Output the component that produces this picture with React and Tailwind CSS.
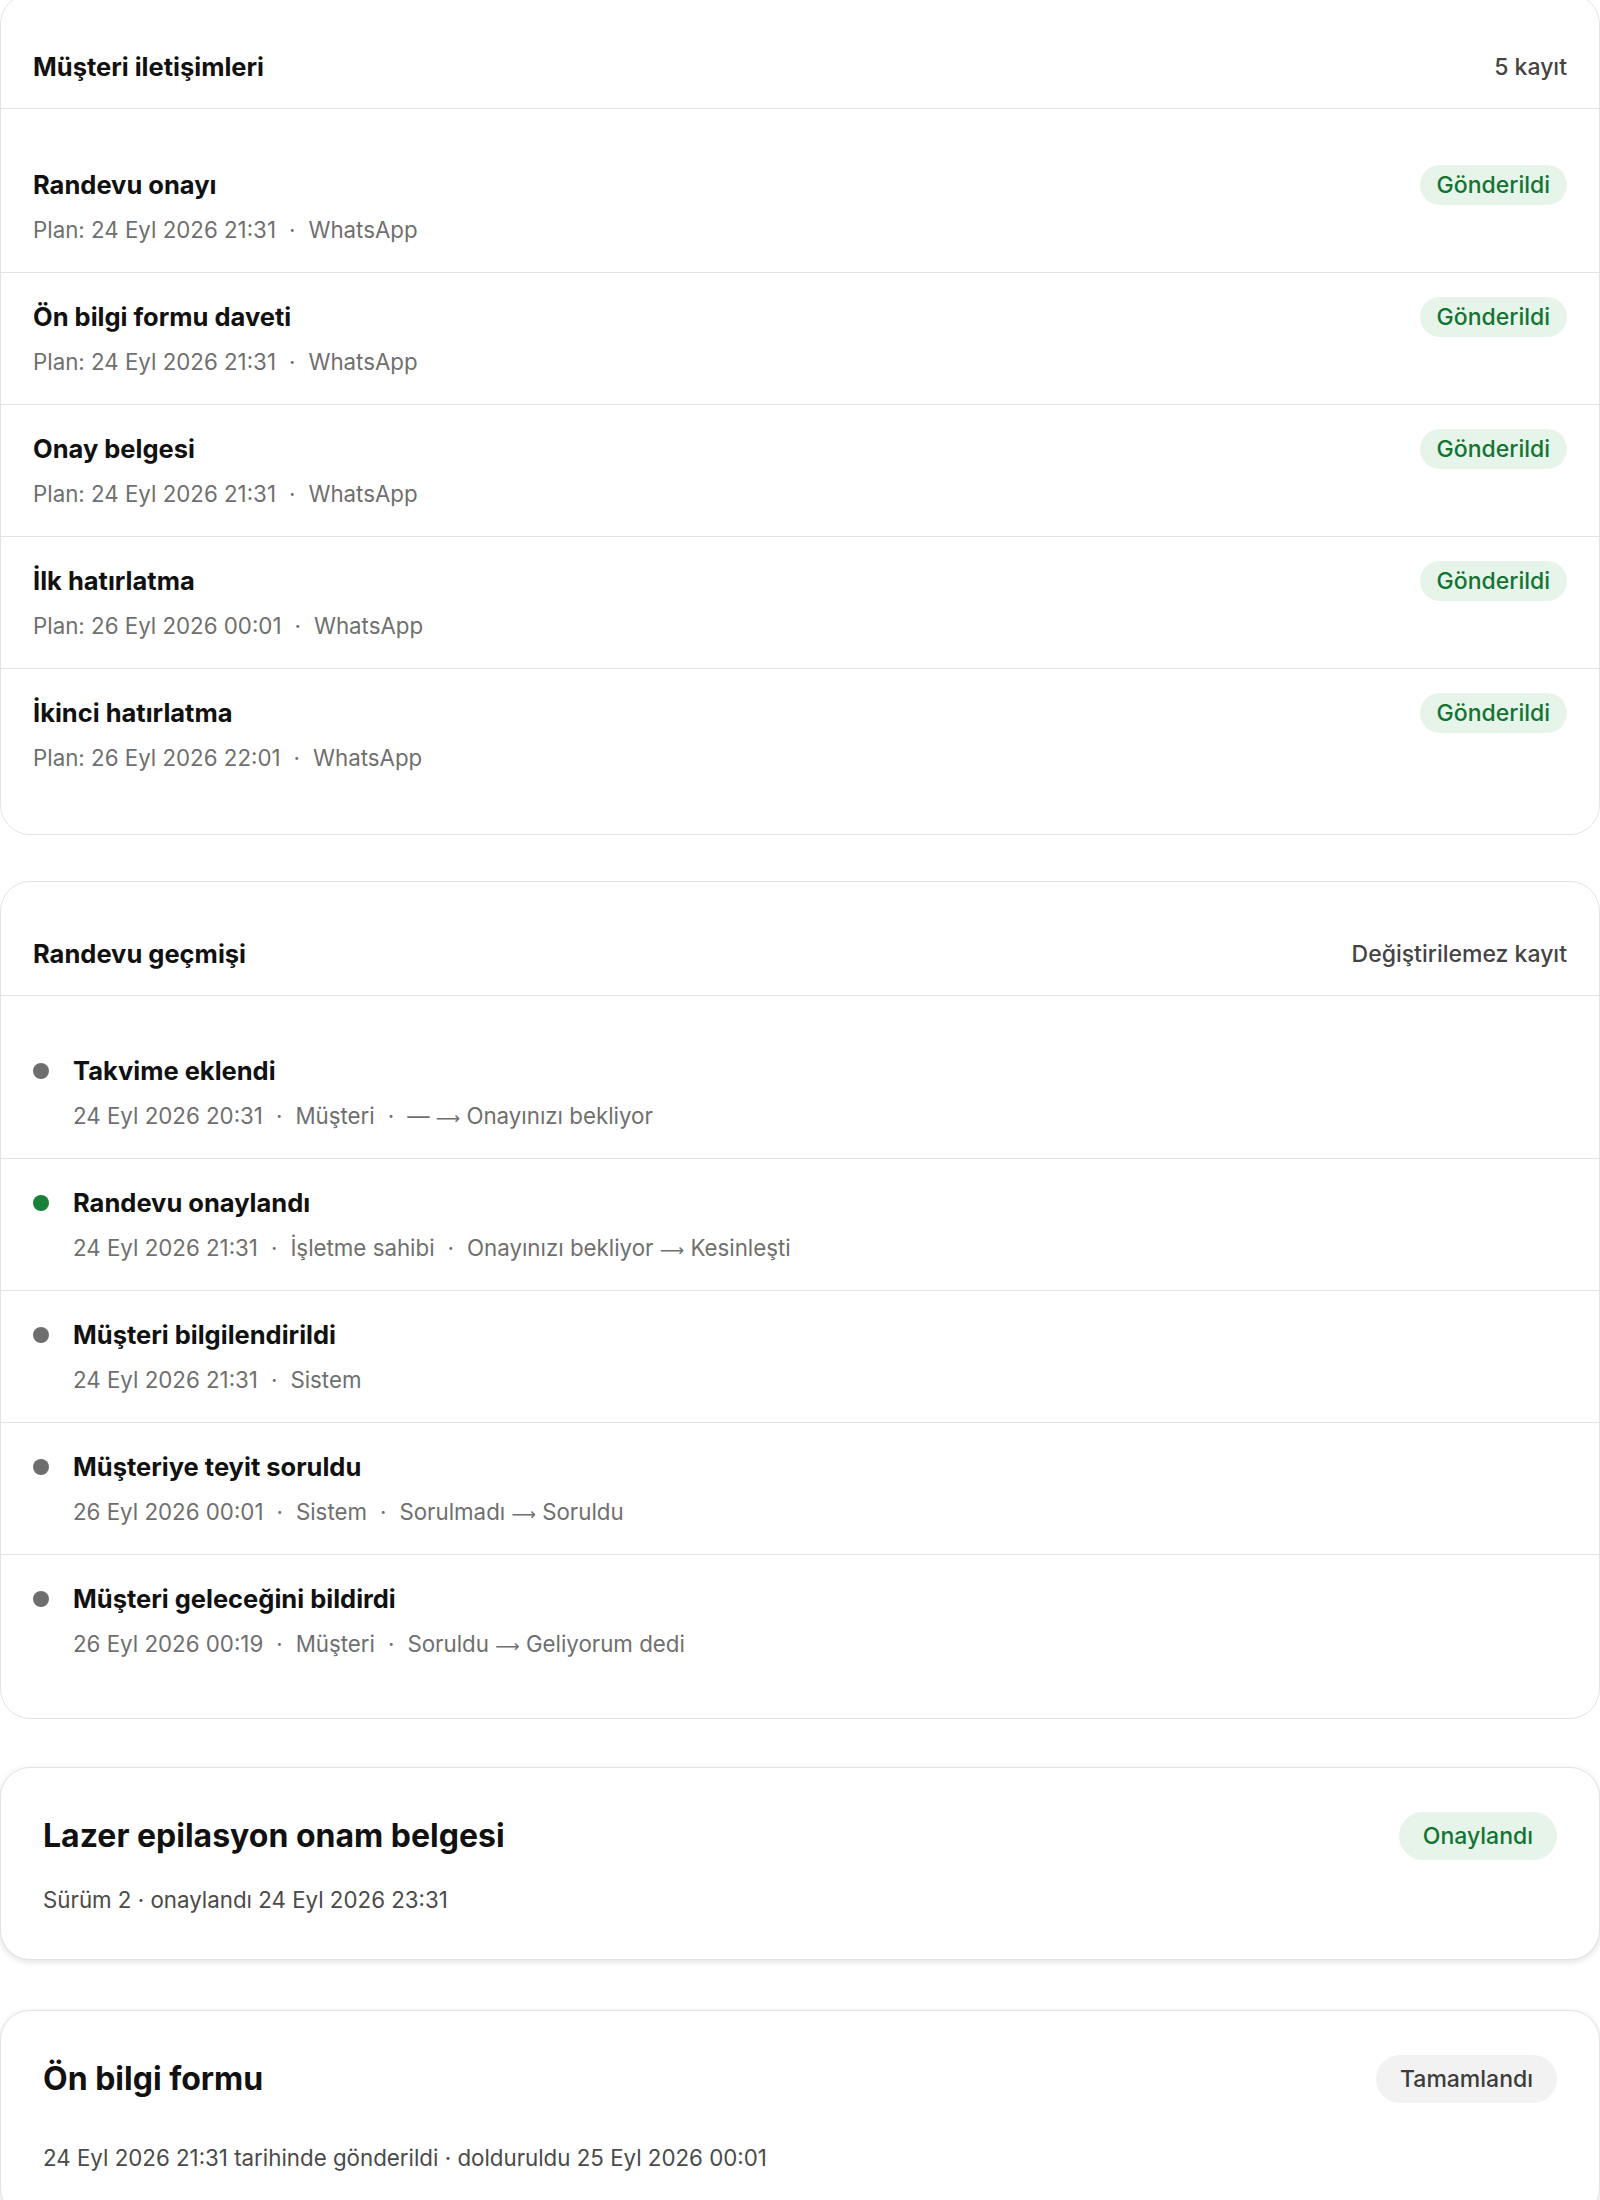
import { Fragment } from 'react';

const messages = [
  { title: 'Randevu onayı', plan: '24 Eyl 2026 21:31' },
  { title: 'Ön bilgi formu daveti', plan: '24 Eyl 2026 21:31' },
  { title: 'Onay belgesi', plan: '24 Eyl 2026 21:31' },
  { title: 'İlk hatırlatma', plan: '26 Eyl 2026 00:01' },
  { title: 'İkinci hatırlatma', plan: '26 Eyl 2026 22:01' },
];

const history = [
  { title: 'Takvime eklendi', parts: ['24 Eyl 2026 20:31', 'Müşteri', ['—', 'Onayınızı bekliyor']], dot: 'bg-[#6e6e6e]' },
  { title: 'Randevu onaylandı', parts: ['24 Eyl 2026 21:31', 'İşletme sahibi', ['Onayınızı bekliyor', 'Kesinleşti']], dot: 'bg-[#188038]' },
  { title: 'Müşteri bilgilendirildi', parts: ['24 Eyl 2026 21:31', 'Sistem'], dot: 'bg-[#6e6e6e]' },
  { title: 'Müşteriye teyit soruldu', parts: ['26 Eyl 2026 00:01', 'Sistem', ['Sorulmadı', 'Soruldu']], dot: 'bg-[#6e6e6e]' },
  { title: 'Müşteri geleceğini bildirdi', parts: ['26 Eyl 2026 00:19', 'Müşteri', ['Soruldu', 'Geliyorum dedi']], dot: 'bg-[#6e6e6e]' },
];

// status change "from → to", long thin arrow from DejaVu
const Change = ({ from, to }) => (
  <span>
    {from} <span className="font-['DejaVu_Sans',sans-serif] text-[17px] leading-none">⟶</span> {to}
  </span>
);

const MetaLine = ({ parts }) => (
  <p className="mt-[9px] h-8 text-[22.3px] leading-8 text-[#6f6f6f]">
    {parts.map((part, i) => (
      <Fragment key={i}>
        {i > 0 && <span className="mx-[13px]">·</span>}
        {Array.isArray(part) ? <Change from={part[0]} to={part[1]} /> : <span>{part}</span>}
      </Fragment>
    ))}
  </p>
);

const CardHeader = ({ title, aside }) => (
  <div className="flex items-center justify-between border-b border-[#e3e3e3] px-8 pt-[56px] pb-[25px]">
    <h2 className="text-[25.5px] leading-8 font-bold text-[#111]">{title}</h2>
    <span className="text-[23px] leading-8 font-medium text-[#444]">{aside}</span>
  </div>
);

const App = () => {
  return (
    <div className="min-h-screen bg-white font-['Inter',sans-serif] overflow-hidden">
      {/* Müşteri iletişimleri */}
      <section className="-mt-[6px] rounded-[30px] border border-[#e3e3e3] bg-white">
        <CardHeader title="Müşteri iletişimleri" aside="5 kayıt" />
        <ul className="pt-8 pb-[34px]">
          {messages.map((m, i) => (
            <li
              key={m.title}
              className={`flex items-start justify-between px-8 pt-6 pb-[26px] ${i > 0 ? 'border-t border-[#e3e3e3]' : ''}`}
            >
              <div>
                <h3 className="text-[25.5px] leading-10 font-bold text-[#111]">{m.title}</h3>
                <MetaLine parts={[`Plan: ${m.plan}`, 'WhatsApp']} />
              </div>
              <span className="flex h-10 items-center rounded-full bg-[#e6f4ea] px-[17px] text-[23px] font-medium text-[#137333]">
                Gönderildi
              </span>
            </li>
          ))}
        </ul>
      </section>

      {/* Randevu geçmişi */}
      <section className="mt-[46px] rounded-[30px] border border-[#e3e3e3] bg-white">
        <CardHeader title="Randevu geçmişi" aside="Değiştirilemez kayıt" />
        <ul className="pt-[31px] pb-8">
          {history.map((h, i) => (
            <li
              key={h.title}
              className={`flex gap-6 px-8 pt-6 pb-[26px] ${i > 0 ? 'border-t border-[#e3e3e3]' : ''}`}
            >
              <div className="flex h-10 w-4 shrink-0 items-center">
                <span className={`h-4 w-4 rounded-full ${h.dot}`}></span>
              </div>
              <div>
                <h3 className="text-[25.5px] leading-10 font-bold text-[#111]">{h.title}</h3>
                <MetaLine parts={h.parts} />
              </div>
            </li>
          ))}
        </ul>
      </section>

      {/* Onam belgesi */}
      <section className="mt-12 rounded-[30px] border border-[#e3e3e3] bg-white px-[42px] pt-[44px] pb-[43px] shadow-[0_2px_6px_rgba(0,0,0,0.12)]">
        <div className="flex h-12 items-center justify-between">
          <h2 className="text-[32px] leading-[48px] font-bold text-[#111]">Lazer epilasyon onam belgesi</h2>
          <span className="flex h-12 items-center rounded-full bg-[#e6f4ea] px-6 text-[23px] font-medium text-[#137333]">
            Onaylandı
          </span>
        </div>
        <p className="mt-6 h-8 text-[22.3px] leading-8 text-[#4a4a4a]">Sürüm 2 · onaylandı 24 Eyl 2026 23:31</p>
      </section>

      {/* Ön bilgi formu */}
      <section className="mt-[50px] rounded-[30px] border border-[#e3e3e3] bg-white px-[42px] pt-[44px] pb-[43px] shadow-[0_2px_6px_rgba(0,0,0,0.12)]">
        <div className="flex h-12 items-center justify-between">
          <h2 className="text-[32px] leading-[48px] font-bold text-[#111]">Ön bilgi formu</h2>
          <span className="flex h-12 items-center rounded-full bg-[#f2f2f2] px-6 text-[23px] font-medium text-[#3c3c3c]">
            Tamamlandı
          </span>
        </div>
        <p className="mt-[39px] h-8 text-[22.3px] leading-8 text-[#4a4a4a]">
          24 Eyl 2026 21:31 tarihinde gönderildi · dolduruldu 25 Eyl 2026 00:01
        </p>
      </section>
    </div>
  );
};

export default App;
